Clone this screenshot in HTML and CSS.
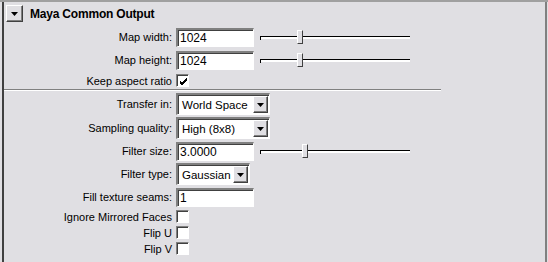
FILE: index.html
```html
<!DOCTYPE html>
<html lang="en">
<head>
    <meta charset="UTF-8">
    <title>Maya Common Output</title>
    <link rel="stylesheet" href="styles.css">
</head>
<body>
    <div class="panel">
        <div class="frame">
            <div class="header">
                <span class="collapse-btn">
                    <svg width="7" height="4" viewBox="0 0 7 4"><path d="M0 0H7L3.5 4Z" fill="#000"/></svg>
                </span>
                <span class="title">Maya Common Output</span>
            </div>

            <div class="section first">
                <div class="row">
                    <label class="lbl">Map width:</label>
                    <div class="field">1024</div>
                    <div class="slider"><span class="thumb" style="left:37px"></span></div>
                </div>
                <div class="row">
                    <label class="lbl">Map height:</label>
                    <div class="field">1024</div>
                    <div class="slider"><span class="thumb" style="left:37px"></span></div>
                </div>
                <div class="row check-row">
                    <label class="lbl">Keep aspect ratio</label>
                    <span class="check">
                        <svg width="9" height="9" viewBox="0 0 9 9"><path d="M1 4L3 6L8 1M1 5L3 7L8 2M1 6L3 8L8 3" stroke="#000" stroke-width="1" fill="none"/></svg>
                    </span>
                </div>
            </div>

            <div class="separator"></div>

            <div class="section second">
                <div class="row tall">
                    <label class="lbl">Transfer in:</label>
                    <div class="combo wide"><span class="combo-text">World Space</span><span class="arrow-btn"><svg width="7" height="4" viewBox="0 0 7 4"><path d="M0 0H7L3.5 4Z" fill="#000"/></svg></span></div>
                </div>
                <div class="row tall">
                    <label class="lbl">Sampling quality:</label>
                    <div class="combo wide"><span class="combo-text">High (8x8)</span><span class="arrow-btn"><svg width="7" height="4" viewBox="0 0 7 4"><path d="M0 0H7L3.5 4Z" fill="#000"/></svg></span></div>
                </div>
                <div class="row">
                    <label class="lbl">Filter size:</label>
                    <div class="field">3.0000</div>
                    <div class="slider"><span class="thumb" style="left:42px"></span></div>
                </div>
                <div class="row tall">
                    <label class="lbl">Filter type:</label>
                    <div class="combo narrow"><span class="combo-text">Gaussian</span><span class="arrow-btn"><svg width="7" height="4" viewBox="0 0 7 4"><path d="M0 0H7L3.5 4Z" fill="#000"/></svg></span></div>
                </div>
                <div class="row">
                    <label class="lbl">Fill texture seams:</label>
                    <div class="field">1</div>
                </div>
                <div class="row check-row">
                    <label class="lbl">Ignore Mirrored Faces</label>
                    <span class="check"></span>
                </div>
                <div class="row check-row">
                    <label class="lbl">Flip U</label>
                    <span class="check"></span>
                </div>
                <div class="row check-row">
                    <label class="lbl">Flip V</label>
                    <span class="check"></span>
                </div>
            </div>
        </div>
    </div>
</body>
</html>
```

FILE: styles.css
```css
html, body {
    height: 100%;
}
body {
    margin: 0;
    background-color: #e0dfe3;
    font-family: "Liberation Sans", Arial, sans-serif;
    font-size: 11px;
    color: #000;
    overflow: hidden;
}
.panel {
    border-top: 2px solid #a0a0a0;
    height: 100%;
    box-sizing: border-box;
}
.frame {
    margin-left: 2px;
    margin-right: 1px;
    height: 100%;
    border-left: 2px solid #404040;
    border-right: 2px solid #808080;
    box-sizing: border-box;
}
.header {
    display: flex;
    align-items: center;
    height: 21px;
}
.collapse-btn {
    display: flex;
    align-items: center;
    justify-content: center;
    width: 17px;
    height: 17px;
    margin-left: 2px;
    margin-top: 2px;
    box-sizing: border-box;
    border-top: 1px solid #fff;
    border-left: 1px solid #fff;
    border-right: 1px solid #404040;
    border-bottom: 1px solid #404040;
    box-shadow: inset -1px -1px 0 #808080;
}
.title {
    font-weight: bold;
    font-size: 12px;
    margin-left: 7px;
    margin-top: 2px;
    letter-spacing: -0.2px;
}
.section {
    display: flex;
    flex-direction: column;
}
.section.first {
    padding-top: 4px;
    gap: 3px;
}
.section.second {
    padding-top: 2px;
    gap: 2px;
}
.row {
    display: grid;
    grid-template-columns: 168px auto auto;
    column-gap: 4px;
    align-items: center;
    height: 20px;
    justify-content: start;
}
.row.tall {
    height: 22px;
}
.row.check-row {
    height: 13px;
    margin-top: 1px;
}
.lbl {
    text-align: right;
    white-space: nowrap;
}
.field {
    width: 78px;
    height: 19px;
    box-sizing: border-box;
    background-color: #fff;
    border-top: 2px solid #808080;
    border-left: 2px solid #808080;
    border-right: 1px solid #fff;
    border-bottom: 1px solid #fff;
    box-shadow: inset 1px 1px 0 #404040;
    padding-left: 2px;
    line-height: 16px;
    font-size: 12px;
}
.slider {
    position: relative;
    width: 150px;
    height: 16px;
    margin-left: 2px;
}
.slider::before {
    content: "";
    position: absolute;
    left: 0;
    right: 0;
    top: 7px;
    height: 1px;
    background-color: #000;
    border-bottom: 2px solid #fff;
}
.slider::after {
    content: "";
    position: absolute;
    left: 0;
    top: 7px;
    width: 1px;
    height: 4px;
    background-color: #000;
}
.thumb {
    position: absolute;
    top: 1px;
    width: 6px;
    height: 14px;
    box-sizing: border-box;
    background-color: #e0dfe3;
    border-top: 1px solid #fff;
    border-left: 1px solid #fff;
    border-right: 1px solid #404040;
    border-bottom: 1px solid #404040;
}
.check {
    display: flex;
    align-items: center;
    justify-content: center;
    width: 13px;
    height: 13px;
    box-sizing: border-box;
    background-color: #fff;
    border-top: 1px solid #808080;
    border-left: 1px solid #808080;
    border-right: 1px solid #fff;
    border-bottom: 1px solid #fff;
    box-shadow: inset 1px 1px 0 #404040;
}
.check svg {
    margin: 1px 0 0 1px;
}
.combo {
    display: flex;
    align-items: center;
    justify-content: space-between;
    height: 22px;
    box-sizing: border-box;
    background-color: #fff;
    border-top: 2px solid #808080;
    border-left: 2px solid #808080;
    border-right: 1px solid #fff;
    border-bottom: 1px solid #fff;
    box-shadow: inset 1px 1px 0 #404040;
    padding-left: 4px;
    font-size: 11.5px;
}
.combo.wide {
    width: 94px;
}
.combo.narrow {
    width: 74px;
}
.arrow-btn {
    display: flex;
    align-items: center;
    justify-content: center;
    width: 15px;
    height: 17px;
    margin-right: 1px;
    box-sizing: border-box;
    background-color: #e0dfe3;
    border-top: 1px solid #fff;
    border-left: 1px solid #fff;
    border-right: 1px solid #404040;
    border-bottom: 1px solid #404040;
    box-shadow: inset -1px -1px 0 #808080;
}
.separator {
    margin-top: 2px;
    width: 437px;
    height: 1px;
    background-color: #808080;
    border-bottom: 1px solid #fff;
}
```
